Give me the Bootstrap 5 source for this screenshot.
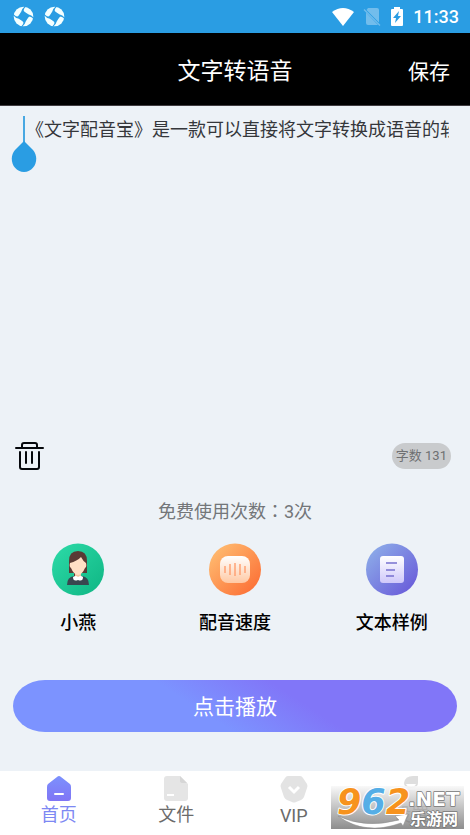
<!DOCTYPE html>
<html lang="zh-CN">
<head>
<meta charset="utf-8">
<meta name="viewport" content="width=device-width, initial-scale=1">
<title>文字转语音</title>
<link href="https://cdn.jsdelivr.net/npm/bootstrap@5.3.0/dist/css/bootstrap.min.css" rel="stylesheet">
<style>
body{font-family:Roboto,"Noto Sans CJK SC",sans-serif;background:#edf2f7;color:#000;font-size:18px;line-height:24px}
svg{display:block;flex:none}
.status-bar{background:#2a9de3;height:33px;color:#fff;padding:0 11px 0 13px}
.notices{gap:10px}
.clock{font-size:18px;font-weight:500}
.title-bar{height:73px;background:#000;color:#fff;border-bottom:1px solid #403c40;padding:5px 20px 0;display:grid;grid-template-columns:1fr auto 1fr}
.title-bar h1{font-size:23px;line-height:32px;font-weight:400}
.save-btn{font-size:21px;line-height:32px;color:#fff;background:none;border:0;padding:0;justify-self:end}
.editor{padding:12px 21px 0 26px}
.editor textarea{display:block;width:100%;height:100%;border:0;padding:0;background:none;resize:none;overflow:hidden;white-space:pre;color:#35373b;outline:0}
.caret-handle{position:absolute;left:10px;top:10px}
.tools{padding:0 19px 0 13px;height:50px}
.icon-btn{border:0;background:none;padding:0}
.counter{background:#c9cbcd;color:#6f7072;font-size:13px;line-height:26px;padding:0 4px}
.quota{color:#737679;margin-top:17px}
.mid-colon{font-family:"Noto Sans CJK TC",sans-serif}
.options{margin-top:19px}
.option{border:0;background:none;padding:0;font-weight:500;color:#000}
.option svg{margin:0 auto 15px}
.play-btn{height:52px;border:0;border-radius:32px/26px;color:#fff;font-size:21px;padding-top:3px;background:linear-gradient(33deg,#7c93ff 0 42%,#8176f8 64%)}
.play-wrap{padding:45px 13px 39px}
.tab-bar{background:#fff;height:64px}
.tab-bar a{color:#6b6b6b;text-decoration:none;padding-top:4px}
.tab-bar a.active{color:#7d88f3}
.site-mark{position:absolute;right:6px;bottom:6px;pointer-events:none;overflow:visible}
.mark-num{font:italic bold 35px "DejaVu Sans",sans-serif}
.mark-net{font:bold 20px "DejaVu Sans",sans-serif}
.mark-cn{font:bold 16px "Noto Sans CJK SC",sans-serif}
</style>
<script src="https://cdn.jsdelivr.net/npm/bootstrap@5.3.0/dist/js/bootstrap.bundle.min.js"></script>
</head>
<body>
<svg width="0" height="0" class="position-absolute" aria-hidden="true">
<defs>
<symbol id="swirl" viewBox="0 0 20 20"><circle cx="10" cy="10" r="9.300" fill="#f4ffff"/><g fill="#2a9de3"><path d="M10 4.500L15.500 10L10 15.500L4.500 10Z"/><path id="slit" d="M4.500 11L8 5Q8.500 2.500 11 .4L12 .8Q9.500 3 10 6Z"/><use href="#slit" transform="rotate(90 10 10)"/><use href="#slit" transform="rotate(180 10 10)"/><use href="#slit" transform="rotate(270 10 10)"/></g></symbol>
<linearGradient id="green" x1="0" y1="0" x2="1" y2="1"><stop stop-color="#2ddba8"/><stop offset="1" stop-color="#0fb583"/></linearGradient>
<linearGradient id="orange" x1="0" y1="0" x2="1" y2="1"><stop stop-color="#ffc477"/><stop offset="1" stop-color="#fc672f"/></linearGradient>
<linearGradient id="violet" x1="0" y1="0" x2="1" y2="1"><stop stop-color="#90b4ea"/><stop offset="1" stop-color="#6653d8"/></linearGradient>
<linearGradient id="peach" x2="0" y2="1"><stop stop-color="#fff"/><stop offset="1" stop-color="#ffc9a4"/></linearGradient>
<linearGradient id="lilac" x2="0" y2="1"><stop stop-color="#fff"/><stop offset="1" stop-color="#cfc8fa"/></linearGradient>
<linearGradient id="home" x2="0" y2="1"><stop stop-color="#7c91fd"/><stop offset="1" stop-color="#8075f5"/></linearGradient>
<linearGradient id="plate" x2="0" y2="1"><stop stop-color="#f8f8f8"/><stop offset="1" stop-color="#7e7e7e"/></linearGradient>
</defs>
</svg>
<div class="d-flex flex-column min-vh-100 position-relative">
<div class="status-bar d-flex align-items-center">
  <div class="notices d-flex me-auto">
    <svg width="21" height="21"><use href="#swirl"/></svg>
    <svg width="21" height="21"><use href="#swirl"/></svg>
  </div>
  <svg width="24" height="20" viewBox="0 0 24 20"><path d="M1 5Q12-3 23 5L12 19Z" fill="#fff"/></svg>
  <svg class="ms-2" width="18" height="20" viewBox="0 0 18 20"><path d="M5 1H14Q16 1 16 3V15.500L3.500 3ZM3 5.500L15 18H5Q3 18 3 16Z" fill="#72bdec"/><path d="M1 2.500L17 18.500" stroke="#72bdec" stroke-width="1.200"/></svg>
  <svg class="ms-2 me-2" width="16" height="20" viewBox="0 0 16 20"><path d="M5 0H11V2H13Q14 2 14 3V18Q14 19 13 19H3Q2 19 2 18V3Q2 2 3 2H5Z" fill="#fff"/><path d="M10 4L4 11H7L6 16L12 9H9Z" fill="#2a9de3"/></svg>
  <span class="clock">11:33</span>
</div>
<header class="title-bar align-items-center">
  <span></span><h1 class="m-0">文字转语音</h1>
  <button type="button" class="save-btn">保存</button>
</header>
<main class="flex-grow-1 d-flex flex-column">
  <div class="editor flex-grow-1 position-relative">
    <textarea aria-label="文本内容" wrap="off" spellcheck="false">《文字配音宝》是一款可以直接将文字转换成语音的软件</textarea>
    <svg class="caret-handle" width="28" height="57" viewBox="0 0 28 57"><path d="M13 0H15V28H13Z" fill="#48a8e2"/><path d="M14 25L23 34C30 42 25 56 14 56S-2 42 5 34Z" fill="#2a9de3"/></svg>
  </div>
  <div class="tools d-flex align-items-center justify-content-between">
    <button type="button" class="icon-btn" aria-label="清空"><svg width="32" height="32" viewBox="0 0 32 32" fill="none" stroke="#06080c" stroke-width="2" stroke-linecap="round" stroke-linejoin="round"><path d="M3 8H30M9 8V5Q9 3 11 3H22Q24 3 24 5V8M7 12V27Q7 29 9 29H24Q26 29 26 27V12M13 12V23M19 12V23"/></svg></button>
    <span class="counter rounded-pill">字数 131</span>
  </div>
  <div class="quota text-center">免费使用次数<span class="mid-colon" lang="zh-TW">：</span>3次</div>
  <div class="options row g-0 text-center">
    <div class="col"><button type="button" class="option"><svg width="54" height="53" viewBox="0 0 54 53"><circle cx="27" cy="26.500" r="26" fill="url(#green)"/><path d="M18 30V18Q18 8 27 8T36 18V30H30V34H23V30Z" fill="#593b35"/><path d="M16 42Q16 34 23 33H31Q38 34 38 42Z" fill="#394650"/><path d="M24 27H30V36H24Z" fill="#f2c6a4"/><path d="M19 20Q26 18 30 14Q32 18 35 20Q36 24 34 25Q31 32 27 32Q23 32 20 25Q18 24 19 20Z" fill="#ffdfc5"/><path d="M22 34Q25 32 27 34Q30 32 32 34Q32 39 27 37Q22 39 22 34Z" fill="#fff"/></svg>小燕</button></div>
    <div class="col"><button type="button" class="option"><svg width="54" height="53" viewBox="0 0 54 53"><circle cx="27" cy="26.500" r="26" fill="url(#orange)"/><rect x="12" y="13" width="30" height="27" rx="8" fill="url(#peach)"/><path d="M17 23V30M22 21V32M27 20V33M32 21V32M37 23V30" stroke="#ff9d6e" stroke-width="1.400"/></svg>配音速度</button></div>
    <div class="col"><button type="button" class="option"><svg width="54" height="53" viewBox="0 0 54 53"><circle cx="27" cy="26.500" r="26" fill="url(#violet)"/><rect x="15" y="13" width="24" height="27" rx="3" fill="url(#lilac)"/><path d="M21 20H32M21 27H30M21 33H29" stroke="#7770d0" stroke-width="1.500"/></svg>文本样例</button></div>
  </div>
  <div class="play-wrap"><button type="button" class="play-btn w-100">点击播放</button></div>
</main>
<nav class="tab-bar row g-0 text-center">
  <a href="#" class="col active"><svg class="mx-auto" width="26" height="28" viewBox="0 0 26 28"><path d="M11 2Q13 0 15 2L24 9Q25 10 25 12V23Q25 26 22 26H4Q1 26 1 23V12Q1 10 2 9Z" fill="url(#home)"/><path d="M9 19H17" stroke="#fff" stroke-width="2" stroke-linecap="round"/></svg>首页</a>
  <a href="#" class="col"><svg class="mx-auto" width="26" height="28" viewBox="0 0 26 28"><path d="M4 1H17L25 9V23Q25 26 22 26H4Q1 26 1 23V4Q1 1 4 1Z" fill="#e5e5e5"/><path d="M17 1V6Q17 8 20 8H24Z" fill="#d6d6d6"/><path d="M4 20H11" stroke="#fff" stroke-width="2"/></svg>文件</a>
  <a href="#" class="col"><svg class="mx-auto" width="28" height="29" viewBox="0 0 28 29"><path d="M8 1H20Q22 1 23 3L27 9Q28 11 27 13L24 22Q23 24 21 25L16 27Q14 28 12 27L7 25Q5 24 4 22L1 13Q0 11 1 9L5 3Q6 1 8 1Z" fill="#e3e3e3"/><path d="M9 12L14 17L19 12" stroke="#fff" stroke-width="3" fill="none"/></svg>VIP</a>
  <a href="#" class="col"><svg class="mx-auto" width="26" height="28" viewBox="0 0 26 28"><path d="M20 1V8Q20 13 13 13T6 8Q7 1 15 1Z" fill="#dedede"/><path d="M8 9H18Q17 12 13 12T8 9Z" fill="#fff"/><path d="M2 26Q3 15 13 15T24 26Z" fill="#ddd"/></svg>设置</a>
</nav>
<svg class="site-mark" width="133" height="43" viewBox="0 0 133 43" role="img" aria-label="962.NET 乐游网">
  <rect width="133" height="43" fill="url(#plate)" opacity=".88"/>
  <path d="M7 30Q34 43 68 34L64 30L77 28L72 40L70 37Q34 50 7 30Z" fill="#fff" stroke="#8b8b8b" stroke-width=".5"/>
  <g paint-order="stroke" stroke-linejoin="round">
    <text class="mark-num" x="6" y="28" stroke="#fff" stroke-width="2"><tspan fill="#f7931e">9</tspan><tspan fill="#55aee6">6</tspan><tspan fill="#f7931e">2</tspan></text>
    <g fill="#fff" stroke="#777" stroke-width="1.500"><text class="mark-net" x="77" y="20">.NET</text><text class="mark-cn" x="79" y="39">乐游网</text></g>
  </g>
</svg>
</div>
</body>
</html>
